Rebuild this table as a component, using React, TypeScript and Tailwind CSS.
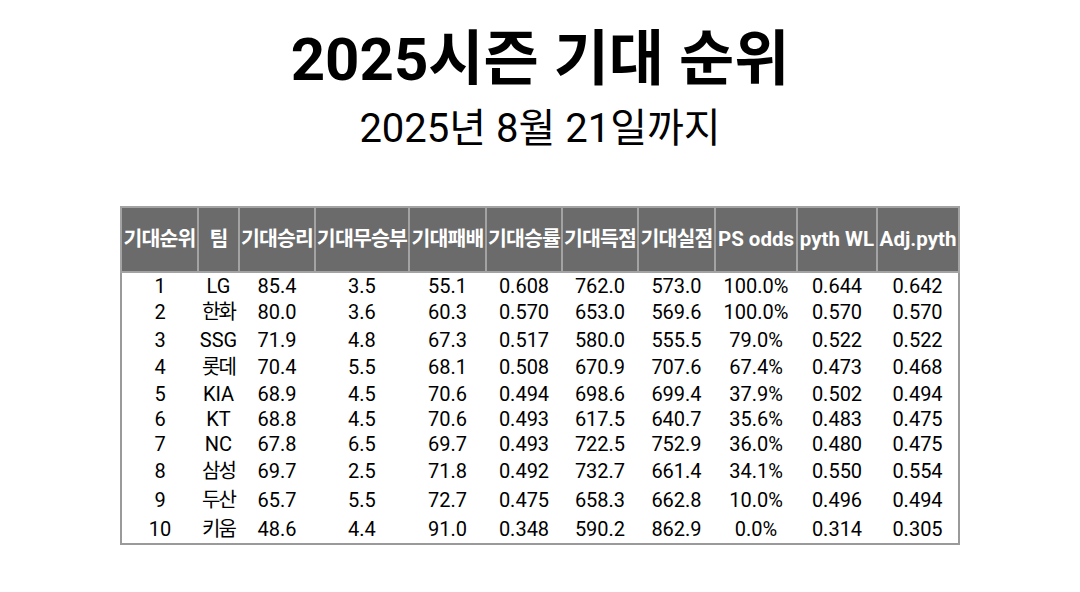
import { Fragment, type ReactNode } from "react";

const font = "font-['Roboto','Noto_Sans_CJK_KR',sans-serif]";

// Hangul runs get their own letter spacing; the CJK fallback runs a little wide
function ko(text: string, tight: string): ReactNode {
  return text.split(/([\uac00-\ud7a3]+)/).map((part, i) =>
    /[\uac00-\ud7a3]/.test(part) ? (
      <span key={i} className={tight}>
        {part}
      </span>
    ) : (
      <Fragment key={i}>{part}</Fragment>
    ),
  );
}

const columns = [
  { label: "기대순위", width: "w-[77px]" },
  { label: "팀", width: "w-[41px]" },
  { label: "기대승리", width: "w-[76px]" },
  { label: "기대무승부", width: "w-[94px]" },
  { label: "기대패배", width: "w-[77px]" },
  { label: "기대승률", width: "w-[76px]" },
  { label: "기대득점", width: "w-[76px]" },
  { label: "기대실점", width: "w-[77px]" },
  { label: "PS odds", width: "w-[82px]" },
  { label: "pyth WL", width: "w-[80px]" },
  { label: "Adj.pyth", width: "w-[82px]" },
];

const rows = [
  { h: "h-[26px]", cells: ["1", "LG", "85.4", "3.5", "55.1", "0.608", "762.0", "573.0", "100.0%", "0.644", "0.642"] },
  { h: "h-[28px]", cells: ["2", "한화", "80.0", "3.6", "60.3", "0.570", "653.0", "569.6", "100.0%", "0.570", "0.570"] },
  { h: "h-[27px]", cells: ["3", "SSG", "71.9", "4.8", "67.3", "0.517", "580.0", "555.5", "79.0%", "0.522", "0.522"] },
  { h: "h-[27px]", cells: ["4", "롯데", "70.4", "5.5", "68.1", "0.508", "670.9", "707.6", "67.4%", "0.473", "0.468"] },
  { h: "h-[27px]", cells: ["5", "KIA", "68.9", "4.5", "70.6", "0.494", "698.6", "699.4", "37.9%", "0.502", "0.494"] },
  { h: "h-[24px]", cells: ["6", "KT", "68.8", "4.5", "70.6", "0.493", "617.5", "640.7", "35.6%", "0.483", "0.475"] },
  { h: "h-[26px]", cells: ["7", "NC", "67.8", "6.5", "69.7", "0.493", "722.5", "752.9", "36.0%", "0.480", "0.475"] },
  { h: "h-[28px]", cells: ["8", "삼성", "69.7", "2.5", "71.8", "0.492", "732.7", "661.4", "34.1%", "0.550", "0.554"] },
  { h: "h-[30px]", cells: ["9", "두산", "65.7", "5.5", "72.7", "0.475", "658.3", "662.8", "10.0%", "0.496", "0.494"] },
  { h: "h-[29px]", cells: ["10", "키움", "48.6", "4.4", "91.0", "0.348", "590.2", "862.9", "0.0%", "0.314", "0.305"] },
];

export default function App() {
  return (
    <div className={`${font} h-[592px] w-[1080px] bg-white text-black`}>
      <div className="flex flex-col items-center">
        <h1 className="mt-[26px] text-[60px] font-bold leading-[68px]">2025시즌 기대 순위</h1>
        <p className="mt-[12px] text-[40px] leading-[46px]">2025년 8월 21일까지</p>

        <table className="mt-[54px] w-[839px] table-fixed border-collapse border-2 border-[#9a9a9a]">
          <thead>
            <tr className="h-[65px] bg-[#6b6b6b]">
              {columns.map((col) => (
                <th
                  key={col.label}
                  className={`${col.width} overflow-visible whitespace-nowrap border-2 border-[#a3a3a3] p-0 text-center text-[20.5px] font-bold text-white`}
                >
                  {ko(col.label, "tracking-[-0.8px]")}
                </th>
              ))}
            </tr>
          </thead>
          <tbody>
            {rows.map((row) => (
              <tr key={row.cells[0]} className={row.h}>
                {row.cells.map((cell, i) => (
                  <td key={i} className="whitespace-nowrap p-0 text-center text-[20px] leading-none">
                    {ko(cell, "tracking-[-2px]")}
                  </td>
                ))}
              </tr>
            ))}
          </tbody>
        </table>
      </div>
    </div>
  );
}
